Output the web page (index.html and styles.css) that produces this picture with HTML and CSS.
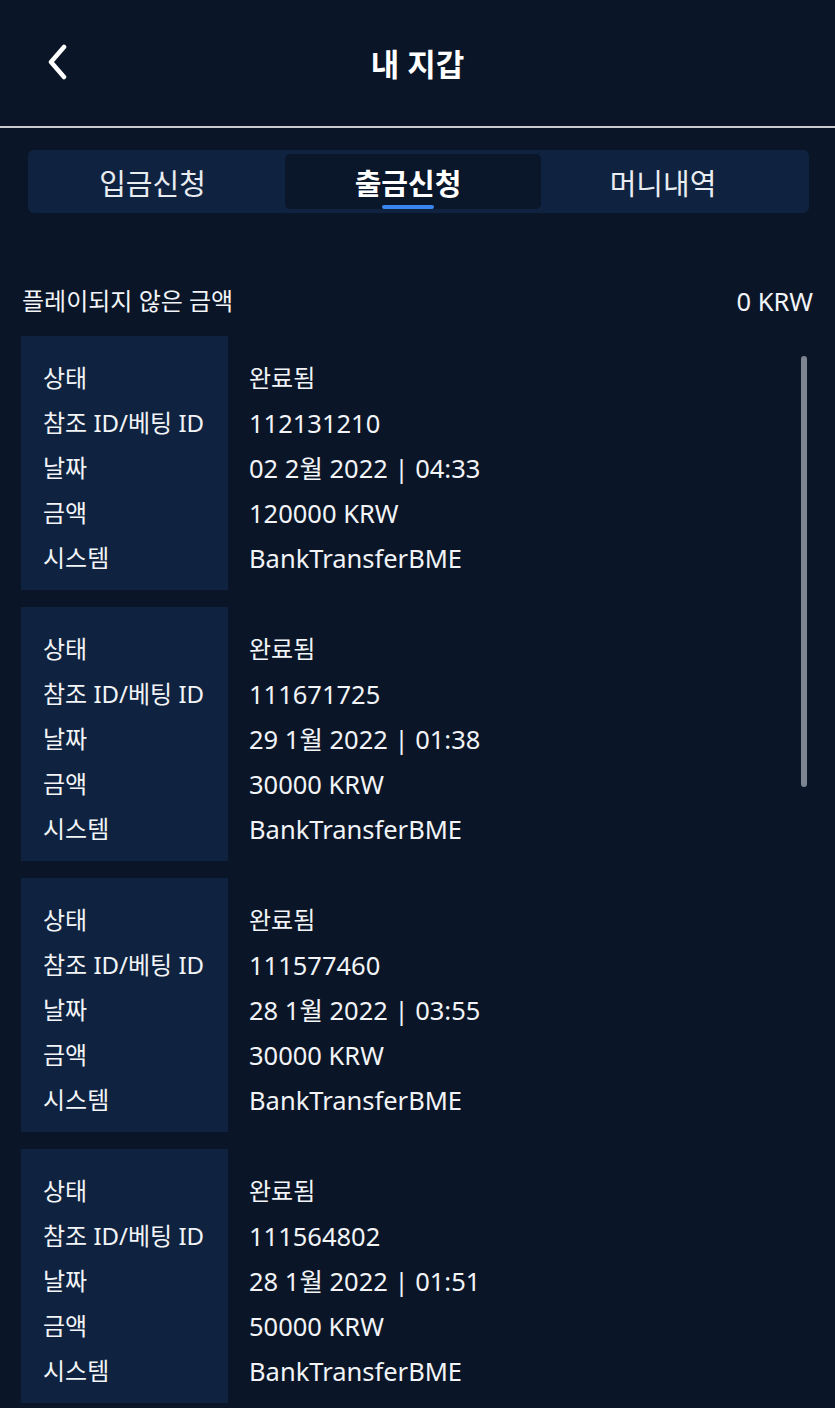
FILE: index.html
```html
<!DOCTYPE html>
<html lang="ko">

<head>
    <meta charset="UTF-8">
    <meta name="viewport" content="width=device-width, initial-scale=1.0">
    <title>내 지갑</title>
    <link rel="stylesheet" href="styles.css">
</head>

<body>
    <header class="topbar">
        <button class="back" aria-label="back">
            <svg width="22" height="36" viewBox="0 0 22 36">
                <path d="M18 3 L5 18 L18 33" fill="none" stroke="#fff" stroke-width="4.5" stroke-linecap="round" stroke-linejoin="round"/>
            </svg>
        </button>
        <h1>내 지갑</h1>
    </header>

    <nav class="tabs">
        <div class="tab">입금신청</div>
        <div class="tab active">출금신청</div>
        <div class="tab">머니내역</div>
    </nav>

    <div class="summary">
        <span>플레이되지 않은 금액</span>
        <span class="num">0 KRW</span>
    </div>

    <div class="list">
        <div class="scrollbar"></div>

        <div class="card">
            <div class="labels">
                <span>상태</span>
                <span>참조 ID/베팅 ID</span>
                <span>날짜</span>
                <span>금액</span>
                <span>시스템</span>
            </div>
            <div class="values">
                <span class="kr">완료됨</span>
                <span>112131210</span>
                <span>02 2월 2022 | 04:33</span>
                <span>120000 KRW</span>
                <span>BankTransferBME</span>
            </div>
        </div>

        <div class="card">
            <div class="labels">
                <span>상태</span>
                <span>참조 ID/베팅 ID</span>
                <span>날짜</span>
                <span>금액</span>
                <span>시스템</span>
            </div>
            <div class="values">
                <span class="kr">완료됨</span>
                <span>111671725</span>
                <span>29 1월 2022 | 01:38</span>
                <span>30000 KRW</span>
                <span>BankTransferBME</span>
            </div>
        </div>

        <div class="card">
            <div class="labels">
                <span>상태</span>
                <span>참조 ID/베팅 ID</span>
                <span>날짜</span>
                <span>금액</span>
                <span>시스템</span>
            </div>
            <div class="values">
                <span class="kr">완료됨</span>
                <span>111577460</span>
                <span>28 1월 2022 | 03:55</span>
                <span>30000 KRW</span>
                <span>BankTransferBME</span>
            </div>
        </div>

        <div class="card">
            <div class="labels">
                <span>상태</span>
                <span>참조 ID/베팅 ID</span>
                <span>날짜</span>
                <span>금액</span>
                <span>시스템</span>
            </div>
            <div class="values">
                <span class="kr">완료됨</span>
                <span>111564802</span>
                <span>28 1월 2022 | 01:51</span>
                <span>50000 KRW</span>
                <span>BankTransferBME</span>
            </div>
        </div>
    </div>
</body>

</html>
```

FILE: styles.css
```css
* {
    margin: 0;
    padding: 0;
    box-sizing: border-box;
}

body {
    background-color: #0a1628;
    color: #f2f4f7;
    font-family: "Noto Sans", "Noto Sans CJK KR", sans-serif;
    height: 1408px;
    overflow: hidden;
}

.topbar {
    height: 128px;
    display: flex;
    align-items: center;
    justify-content: center;
    position: relative;
    border-bottom: 2px solid #c9cbcf;
    background-color: #0a1628;
}

.topbar h1 {
    font-size: 31px;
    font-weight: 700;
    color: #fff;
    margin-top: -2px;
}

.back {
    position: absolute;
    left: 46px;
    top: 44px;
    background: none;
    border: none;
}

.tabs {
    display: grid;
    grid-template-columns: 255px 256px 254px;
    margin: 22px 26px 0 28px;
    height: 63px;
    padding: 4px 0 4px 2px;
    background-color: #0f2341;
    border-radius: 6px;
}

.tab {
    display: flex;
    align-items: center;
    justify-content: center;
    padding-right: 10px;
    font-size: 29px;
    color: #e9ecf1;
    position: relative;
    border-radius: 5px;
}

.tab.active {
    background-color: #0a1629;
    font-weight: 700;
    color: #fff;
}

.tab.active::after {
    content: "";
    position: absolute;
    bottom: 0;
    left: calc(50% - 5px);
    width: 52px;
    height: 4px;
    margin-left: -26px;
    border-radius: 2px;
    background-color: #3a86f0;
}

.summary {
    display: flex;
    justify-content: space-between;
    align-items: center;
    margin: 72px 22px 0 22px;
    font-size: 24px;
    line-height: 32px;
}

.summary .num {
    font-size: 25.5px;
}

.list {
    position: relative;
    margin: 19px 0 0 21px;
    display: flex;
    flex-direction: column;
    gap: 17px;
}

.scrollbar {
    position: absolute;
    right: 28px;
    top: 20px;
    width: 6px;
    height: 431px;
    border-radius: 3px;
    background-color: #7c8591;
}

.card {
    display: flex;
    height: 254px;
}

.labels,
.values {
    display: flex;
    flex-direction: column;
    justify-content: center;
    gap: 9px;
    padding-top: 10px;
    line-height: 36px;
}

.labels {
    width: 207px;
    padding-left: 22px;
    background-color: #0f2340;
    font-size: 24px;
}

.values {
    padding-left: 21px;
    font-size: 25.5px;
}

.values .kr {
    font-size: 24px;
}
```
